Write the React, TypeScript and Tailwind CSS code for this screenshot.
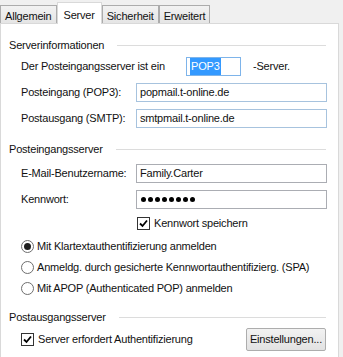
const font = { fontFamily: '"Liberation Sans", Arial, sans-serif' };

function GroupHeader({ title }: { title: string }) {
  return (
    <div className="flex h-[18px] items-center pl-[8px] pr-[12px]">
      <span className="whitespace-nowrap">{title}</span>
      <div className="ml-[13px] h-px flex-1 bg-[#dcdcdc]" />
    </div>
  );
}

function Field({ children, tone = "gray" }: { children: React.ReactNode; tone?: "gray" | "blue" }) {
  return (
    <div
      className={
        "flex h-[19px] w-[191px] items-center border bg-white pl-[3px] " +
        (tone === "blue" ? "border-[#a7c3de]" : "border-[#abadb3]")
      }
    >
      {children}
    </div>
  );
}

function Check() {
  return (
    <span className="flex h-[13px] w-[13px] shrink-0 items-center justify-center border border-[#333333] bg-white">
      <svg width="9" height="9" viewBox="0 0 9 9">
        <path d="M1 4.5 L3.5 7 L8 1.5" fill="none" stroke="#000" strokeWidth="1.8" />
      </svg>
    </span>
  );
}

function Radio({ checked }: { checked?: boolean }) {
  return (
    <span className="flex h-[13px] w-[13px] shrink-0 items-center justify-center rounded-full border border-[#6e6e6e] bg-white">
      {checked && <span className="h-[7px] w-[7px] rounded-full bg-[#1e1e1e]" />}
    </span>
  );
}

function Tab({ label, active }: { label: string; active?: boolean }) {
  if (active) {
    return (
      <div className="relative z-10 -mb-px flex h-[22px] items-start border border-b-0 border-[#d9d9d9] bg-white px-[6px] pt-[4px]">
        {label}
      </div>
    );
  }
  return (
    <div className="flex h-[18px] items-start border border-b-0 border-[#acacac] bg-gradient-to-b from-[#f2f2f2] to-[#e5e5e5] px-[4px] pt-[2px]">
      {label}
    </div>
  );
}

export default function App() {
  return (
    <div
      className="h-[357px] w-[343px] overflow-hidden bg-[#f0f0f0] text-[11px] tracking-[-0.2px] text-[#111]"
      style={font}
    >
      {/* Tabs */}
      <div className="flex h-[23px] items-end">
        <Tab label="Allgemein" />
        <Tab label="Server" active />
        <Tab label="Sicherheit" />
        <Tab label="Erweitert" />
      </div>

      {/* Panel */}
      <div className="h-[340px] w-[339px] border border-[#d9d9d9] bg-white">
        <div className="pt-[12px]">
          <GroupHeader title="Serverinformationen" />
        </div>

        <div className="mt-[3px] flex h-[19px] items-center pl-[20px]">
          <span className="w-[165px]">Der Posteingangsserver ist ein</span>
          <div className="flex h-[19px] w-[55px] items-center border border-[#7eb4ea] bg-white pl-[3px]">
            <span className="bg-[#3399ff] px-px text-white">POP3</span>
          </div>
          <span className="ml-[12px]">-Server.</span>
        </div>

        <div className="mt-[7px] flex items-center pl-[20px]">
          <span className="w-[115px]">Posteingang (POP3):</span>
          <Field tone="blue">popmail.t-online.de</Field>
        </div>

        <div className="mt-[7px] flex items-center pl-[20px]">
          <span className="w-[115px]">Postausgang (SMTP):</span>
          <Field tone="blue">smtpmail.t-online.de</Field>
        </div>

        <div className="mt-[12px]">
          <GroupHeader title="Posteingangsserver" />
        </div>

        <div className="mt-[6px] flex items-center pl-[20px]">
          <span className="w-[115px]">E-Mail-Benutzername:</span>
          <Field>Family.Carter</Field>
        </div>

        <div className="mt-[7px] flex items-center pl-[20px]">
          <span className="w-[115px]">Kennwort:</span>
          <Field>
            <span className="flex gap-[2px] pl-px">
              {Array.from({ length: 8 }).map((_, i) => (
                <span key={i} className="h-[5px] w-[5px] rounded-full bg-black" />
              ))}
            </span>
          </Field>
        </div>

        <div className="mt-[6px] flex h-[16px] items-center gap-[4px] pl-[136px]">
          <Check />
          <span>Kennwort speichern</span>
        </div>

        <div className="mt-[7px] flex h-[16px] items-center gap-[3px] pl-[20px]">
          <Radio checked />
          <span>Mit Klartextauthentifizierung anmelden</span>
        </div>
        <div className="mt-[5px] flex h-[16px] items-center gap-[3px] pl-[20px]">
          <Radio />
          <span>Anmeldg. durch gesicherte Kennwortauthentifizierg. (SPA)</span>
        </div>
        <div className="mt-[5px] flex h-[16px] items-center gap-[3px] pl-[20px]">
          <Radio />
          <span>Mit APOP (Authenticated POP) anmelden</span>
        </div>

        <div className="mt-[12px]">
          <GroupHeader title="Postausgangsserver" />
        </div>

        <div className="mt-px flex h-[24px] items-center pl-[20px] pr-[12px]">
          <Check />
          <span className="ml-[4px] flex-1">Server erfordert Authentifizierung</span>
          <div className="flex h-[23px] w-[80px] items-center justify-center rounded-[2px] border border-[#adadad] bg-gradient-to-b from-[#f2f2f2] to-[#e2e2e2]">
            Einstellungen...
          </div>
        </div>
      </div>
    </div>
  );
}
